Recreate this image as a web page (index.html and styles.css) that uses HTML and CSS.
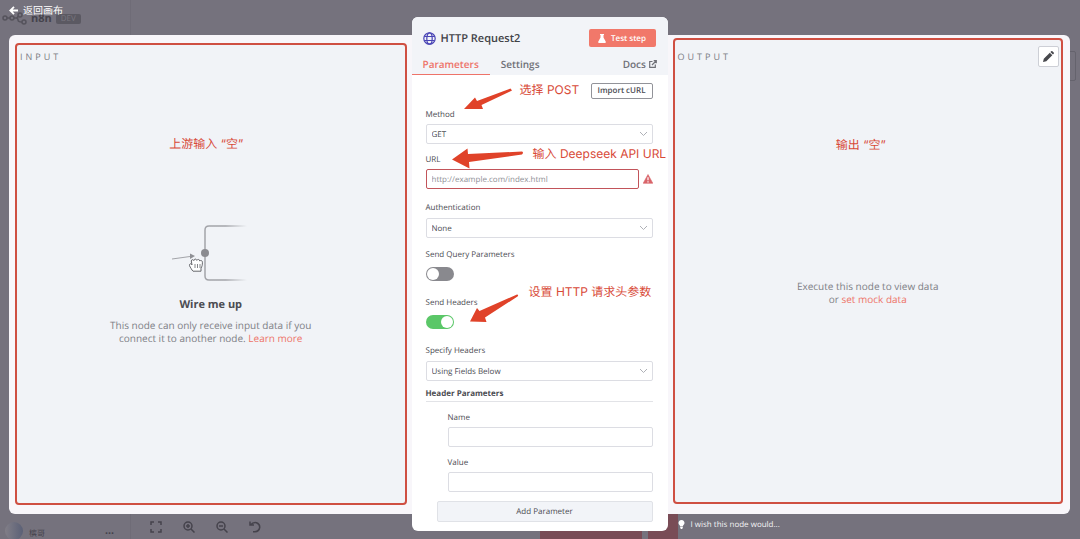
FILE: index.html
```html
<!DOCTYPE html>
<html lang="zh-CN">
  <head>
    <meta charset="UTF-8" />
    <meta name="viewport" content="width=device-width, initial-scale=1.0" />
    <title>HTTP Request2 - n8n</title>
    <link rel="stylesheet" href="styles.css">
  </head>
  <body>
    <!-- Dimmed canvas behind the node view -->
    <div class="backdrop">
      <div class="brand">
        <svg width="25" height="14" viewBox="0 0 25 14" fill="none" stroke="#55535c" stroke-width="1.500">
          <circle cx="3" cy="6" r="2" /><circle cx="10" cy="6" r="2" />
          <circle cx="18" cy="3" r="2" /><circle cx="22" cy="10" r="2" />
          <path d="M5 6h3M12 6h2q2 0 2-2M14 6q2 0 2 2t4 2" />
        </svg>
        <span class="brand-name">n8n</span>
        <span class="brand-tag">DEV</span>
      </div>
      <div class="sidebar-edge"></div>
      <div class="canvas-card"></div>
      <div class="canvas-buttons"><i></i><i></i></div>
    </div>

    <div class="page">
      <header class="topbar">
        <a href="#" class="back">
          <svg width="9" height="9" viewBox="0 0 9 9" fill="none" stroke="#fff" stroke-width="1.800">
            <path d="M9 4.500H1.500M5 .8L1.300 4.500 5 8.200" />
          </svg>
          返回画布
        </a>
      </header>

      <main class="node-view">
        <section class="panel panel-input">
          <div class="frame">
            <h2>INPUT</h2>
            <p class="note note-center">上游输入 “空”</p>
            <div class="empty">
              <svg class="wire" width="82" height="58" viewBox="0 0 82 58" fill="none">
                <defs>
                  <linearGradient id="fade" x1="34" x2="77" y1="0" y2="0" gradientUnits="userSpaceOnUse">
                    <stop offset=".5" stop-color="#a3a4a9" />
                    <stop offset="1" stop-color="#a3a4a9" stop-opacity="0" />
                  </linearGradient>
                </defs>
                <path d="M77 1H39q-4 0-4 4v46q0 4 4 4h38" stroke="url(#fade)" stroke-width="1.500" />
                <circle cx="35" cy="28" r="4" fill="#8b8b90" />
                <path d="M2 34l18-2.500" stroke="#a3a4a9" />
                <path d="M20 28.500l5 2.500-5 3z" fill="#8f9095" />
                <path d="M22 45c-1-2-3-4-2.500-5.500.6-1.300 2-.6 2.500.5l-.7-4c0-1.600 2-1.800 2.500-.4.3-2 2.600-2 3-.2.7-1.500 2.800-1.200 3 .6 1-1 2.600-.4 2.600 1.200 0 3-.3 4-1.400 6v3h-8z" fill="#fff" stroke="#66676c" />
                <path d="M25 39v4M27.500 39v4M30 39v4" stroke="#66676c" stroke-width=".8" />
              </svg>
              <h3>Wire me up</h3>
              <p>This node can only receive input data if you<br>connect it to another node. <a href="#">Learn more</a></p>
            </div>
          </div>
        </section>

        <section class="modal">
          <div class="modal-head">
            <div class="title-row">
              <svg width="13" height="13" viewBox="0 0 13 13" fill="none" stroke="#4a45b5" stroke-width="1.200">
                <circle cx="6.500" cy="6.500" r="5.700" />
                <ellipse cx="6.500" cy="6.500" rx="2.700" ry="5.700" />
                <path d="M1.300 4.500h10.400M1.300 8.500h10.400" />
              </svg>
              <h1>HTTP Request2</h1>
              <button type="button" class="btn-test">
                <svg width="8" height="9" viewBox="0 0 8 9" fill="#fff">
                  <path d="M2 0h4v1h-.5v2.600L7.800 7.800Q8 9 7 9H1Q0 9 .2 7.800L2.500 3.600V1H2z" />
                </svg>
                Test step
              </button>
            </div>
            <nav class="tabs">
              <a href="#" class="active">Parameters</a>
              <a href="#">Settings</a>
              <a href="#" class="docs">
                Docs
                <svg width="8" height="8" viewBox="0 0 8 8" fill="none" stroke="#6f7077" stroke-width="1.200">
                  <path d="M3.500 1.500H.7v5.800h5.600V4.500M3 5l4-4M4.700.7h2.600v2.600" />
                </svg>
              </a>
            </nav>
          </div>

          <form class="params">
            <button type="button" class="btn-curl">Import cURL</button>

            <div class="field tight">
              <label for="method">Method</label>
              <div class="select">
                <select id="method"><option>GET</option></select>
                <svg width="9" height="6" viewBox="0 0 9 6"><path d="M1 1l3.500 3.500L8 1" /></svg>
              </div>
            </div>

            <div class="field tight">
              <label for="url">URL</label>
              <div class="url-row">
                <input type="text" id="url" class="invalid" placeholder="http://example.com/index.html" />
                <svg width="10" height="10" viewBox="0 0 10 10">
                  <path d="M5 .5l4.800 8.800H.2z" fill="#d9646a" stroke="#d9646a" stroke-linejoin="round" stroke-width=".6" />
                  <path d="M5 3.200v3M5 7.200v1.200" stroke="#fff" stroke-width="1.200" />
                </svg>
              </div>
            </div>

            <div class="field">
              <label for="auth">Authentication</label>
              <div class="select">
                <select id="auth"><option>None</option></select>
                <svg width="9" height="6" viewBox="0 0 9 6"><path d="M1 1l3.500 3.500L8 1" /></svg>
              </div>
            </div>

            <div class="field toggle">
              <label for="query">Send Query Parameters</label>
              <input type="checkbox" id="query" />
            </div>

            <div class="field toggle">
              <label for="headers">Send Headers</label>
              <input type="checkbox" id="headers" checked />
            </div>

            <div class="field">
              <label for="specify">Specify Headers</label>
              <div class="select">
                <select id="specify"><option>Using Fields Below</option></select>
                <svg width="9" height="6" viewBox="0 0 9 6"><path d="M1 1l3.500 3.500L8 1" /></svg>
              </div>
            </div>

            <h4>Header Parameters</h4>
            <div class="nested">
              <div class="field tight">
                <label for="name">Name</label>
                <input type="text" id="name" />
              </div>
              <div class="field tight">
                <label for="value">Value</label>
                <input type="text" id="value" />
              </div>
            </div>
            <button type="button" class="btn-add">Add Parameter</button>
          </form>

          <!-- Tutorial notes over the form -->
          <p class="note note-method">选择 POST</p>
          <p class="note note-url">输入 Deepseek API URL</p>
          <p class="note note-headers">设置 HTTP 请求头参数</p>
          <svg class="arrow arrow-method" width="50" height="24" viewBox="0 0 50 24">
            <path d="M1 21L12 9.500l2 3.500L47.500 .5l1.500 2L18.500 17l1.500 4z" />
          </svg>
          <svg class="arrow arrow-url" width="74" height="24" viewBox="0 0 74 24">
            <path d="M1 12.500L16.500 1.500l.5 5.500 54-2.500q2 1 0 3L18 15l.5 6.500z" />
          </svg>
          <svg class="arrow arrow-headers" width="52" height="30" viewBox="0 0 52 30">
            <path d="M1 27.500L8 14l2.500 3L48 .5q2 .5 .5 2L16 23.500l1.500 4.500z" />
          </svg>
        </section>

        <section class="panel panel-output">
          <div class="frame">
            <h2>OUTPUT</h2>
            <button type="button" class="btn-edit" aria-label="Edit output">
              <svg width="11" height="11" viewBox="0 0 11 11" fill="#47484d">
                <path d="M0 11l.8-3.300L6.800 1.700l2.500 2.500-6 6zM7.400 1.100L8.200.3q.6-.5 1.200 0l1.300 1.300q.5.600 0 1.200l-.8.8z" />
              </svg>
            </button>
            <p class="note note-center">输出 “空”</p>
            <p class="empty">Execute this node to view data<br>or <a href="#">set mock data</a></p>
          </div>
        </section>
      </main>

      <footer class="bottombar">
        <div class="canvas-tools">
          <span class="avatar"></span>
          <span class="user">槟哥</span>
          <span class="dots">•••</span>
          <div class="zoom">
            <svg width="12" height="12" viewBox="0 0 12 12"><path d="M1 4V1h3M8 1h3v3M11 8v3H8M4 11H1V8" /></svg>
            <svg width="12" height="12" viewBox="0 0 12 12"><circle cx="5" cy="5" r="4" /><path d="M8 8l3.500 3.500M3 5h4M5 3v4" /></svg>
            <svg width="12" height="12" viewBox="0 0 12 12"><circle cx="5" cy="5" r="4" /><path d="M8 8l3.500 3.500M3 5h4" /></svg>
            <svg width="12" height="12" viewBox="0 0 12 12"><path d="M1 .5V4h4M1.500 4Q4 1 7.500 1.700 11 3 10.700 6.500 10 10.500 6 10.700H4" /></svg>
          </div>
        </div>
        <a href="#" class="feedback">
          <svg width="7" height="9" viewBox="0 0 7 9" fill="#fff">
            <path d="M3.500 0C5.500 0 6.500 1.500 6.500 3S5 5 4.800 6.500H2.200C2 5 .5 4.500 .5 3S1.500 0 3.500 0zM2.200 7h2.600v1L4 9H3L2.200 8z" />
          </svg>
          I wish this node would...
        </a>
      </footer>
    </div>
  </body>
</html>
```
FILE: styles.css
```css
* {
  box-sizing: border-box;
}

body {
  margin: 0;
  min-height: 100vh;
  overflow: hidden;
  position: relative;
  background-color: #75727d;
  font-family: "Open Sans", "Noto Sans CJK SC", sans-serif;
  font-size: 8px;
  color: #4b4c52;
  text-rendering: geometricPrecision;
}

h1,
h2,
h3,
h4,
p {
  margin: 0;
}

a {
  color: #ee7369;
  text-decoration: none;
}

button,
input,
select {
  font: inherit;
  color: inherit;
  text-rendering: inherit;
}

button {
  cursor: pointer;
}

/* Dimmed canvas */
.backdrop {
  position: absolute;
  inset: 0;
  overflow: hidden;
}

.brand {
  display: flex;
  align-items: center;
  gap: 4px;
  padding: 12px 2px;
  color: #45434c;
}

.brand-name {
  font-size: 11px;
  line-height: 14px;
  font-weight: 700;
}

.brand-tag {
  padding: 0 5px;
  border-radius: 2px;
  background: #5b5962;
  color: #79767f;
  line-height: 10px;
}

.sidebar-edge {
  position: absolute;
  top: 0;
  bottom: 0;
  left: 130px;
  border-left: 1px solid #6f6c77;
}

.canvas-card {
  position: absolute;
  top: 51px;
  right: 4px;
  width: 20px;
  height: 30px;
  border: 1px solid #65636d;
  border-radius: 2px;
}

.canvas-buttons {
  position: absolute;
  bottom: 0;
  left: 50%;
  display: flex;
  gap: 6px;
  height: 25px;
}

.canvas-buttons i {
  width: 102px;
  background: #794c56;
}

.canvas-buttons i + i {
  width: 30px;
}

/* Node view */
.page {
  position: relative;
  min-height: 100vh;
  display: flex;
  flex-direction: column;
}

.topbar {
  height: 35px;
  padding: 3px 9px;
}

.back {
  display: inline-flex;
  align-items: center;
  gap: 5px;
  color: #fff;
  font-size: 10px;
  line-height: 15px;
}

.node-view {
  flex: 1;
  display: grid;
  grid-template-columns: 1fr 256px 1fr;
  margin: 0 10px 0 9px;
  border-radius: 6px;
  background: #f8f6fa;
}

.panel {
  display: flex;
}

.panel-input {
  padding: 8px 5px 9px 6px;
}

.panel-output {
  padding: 3px 7px 10px 5px;
}

.frame {
  flex: 1;
  position: relative;
  display: flex;
  flex-direction: column;
  border: 2px solid #cf4f42;
  border-radius: 4px;
  background: #f1f3f7;
}

.frame h2 {
  padding: 5px 3px 0;
  font-size: 9px;
  font-weight: 400;
  line-height: 14px;
  letter-spacing: 3px;
  color: #7b7c83;
}

.panel-output h2 {
  padding-top: 10px;
}

.empty {
  margin: auto;
  text-align: center;
  font-size: 10px;
  line-height: 13px;
  color: #7e7f86;
}

.panel-input .empty {
  padding-top: 3px;
}

.panel-output .empty {
  padding-top: 20px;
}

.empty h3 {
  margin: 13px 0 5px;
  font-size: 11px;
  line-height: 18px;
  color: #4b4c52;
  font-weight: 700;
}

.wire {
  display: block;
  margin: 0 auto;
}

.btn-edit {
  position: absolute;
  top: 6px;
  right: 2px;
  width: 21px;
  height: 21px;
  padding: 0;
  display: grid;
  place-items: center;
  border: 1px solid #cdcfd6;
  border-radius: 2px;
  background: #fff;
}

/* Modal */
.modal {
  position: relative;
  z-index: 1;
  margin: -18px 0 -17px;
  border-radius: 6px;
  background: #fff;
}

.modal-head {
  height: 58px;
  border-radius: 6px 6px 0 0;
  background: #f2f4f8;
}

.title-row {
  display: flex;
  align-items: center;
  gap: 5px;
  height: 39px;
  padding: 3px 12px 0 11px;
}

.title-row h1 {
  flex: 1;
  font-size: 11px;
  font-weight: 600;
  color: #414247;
}

.btn-test {
  display: flex;
  align-items: center;
  justify-content: center;
  gap: 5px;
  width: 67px;
  height: 18px;
  padding: 0;
  border: 0;
  border-radius: 2px;
  background: #f1786a;
  color: #fff;
  font-weight: 600;
}

.tabs {
  display: flex;
  height: 19px;
  font-size: 10px;
  font-weight: 600;
  line-height: 16px;
}

.tabs a {
  padding: 0 11px;
  color: #6f7077;
}

.tabs .active {
  color: #ee7369;
  border-bottom: 1px solid #ee7369;
}

.tabs .docs {
  margin-left: auto;
}

.params {
  display: flex;
  flex-direction: column;
  padding: 8px 15px 9px 14px;
}

.btn-curl {
  align-self: flex-end;
  width: 62px;
  height: 16px;
  padding: 0;
  border: 1px solid #929399;
  border-radius: 2px;
  background: #fff;
  font-weight: 600;
  line-height: 14px;
  white-space: nowrap;
}

.field {
  display: flex;
  flex-direction: column;
  gap: 3px;
  margin-top: 12px;
}

.field.tight {
  gap: 2px;
  margin-top: 9px;
}

.field.toggle {
  gap: 5px;
  margin-top: 10px;
}

.toggle + .field,
.toggle + .field.toggle {
  margin-top: 15px;
}

.field label {
  line-height: 14px;
}

.field input[type="text"],
.field select {
  width: 100%;
  height: 20px;
  padding: 0 5px;
  border: 1px solid #dcdde3;
  border-radius: 2px;
  background: #fff;
  appearance: none;
}

.field input::placeholder {
  color: #8f9096;
}

.field input.invalid {
  border-color: #c2545a;
}

.url-row {
  display: flex;
  align-items: center;
  gap: 4px;
}

.url-row svg {
  flex: none;
}

.select {
  display: flex;
  position: relative;
}

.select svg {
  position: absolute;
  top: 7px;
  right: 5px;
  fill: none;
  stroke: #aeb0b6;
}

.toggle input {
  appearance: none;
  width: 28px;
  height: 14px;
  margin: 0;
  padding: 1px;
  border-radius: 7px;
  background: #89898e;
}

.toggle input::before {
  content: "";
  display: block;
  width: 12px;
  height: 12px;
  border-radius: 50%;
  background: #fff;
}

.toggle input:checked {
  background: #5bc768;
}

.toggle input:checked::before {
  margin-left: auto;
}

.params h4 {
  margin-top: 6px;
  border-bottom: 1px solid #e2e3e7;
  font-weight: 700;
  line-height: 14px;
}

.nested {
  margin-left: 22px;
}

.btn-add {
  height: 21px;
  margin: 9px 0 0 11px;
  padding: 0;
  border: 1px solid #e0e2e7;
  border-radius: 2px;
  background: #f2f4f8;
}

/* Tutorial notes */
.note {
  position: absolute;
  font-family: Inter, "Noto Sans CJK SC", sans-serif;
  font-size: 12px;
  line-height: 18px;
  color: #d84a38;
  white-space: nowrap;
}

.note-center {
  left: 0;
  right: 9px;
  top: 90px;
  text-align: center;
}

.panel-output .note-center {
  right: 14px;
  top: 96px;
}

.note-method {
  top: 64px;
  left: 108px;
}

.note-url {
  top: 128px;
  left: 121px;
}

.note-headers {
  top: 266px;
  left: 117px;
}

.arrow {
  position: absolute;
  fill: #e04229;
}

.arrow-method {
  top: 71px;
  left: 51px;
}

.arrow-url {
  top: 130px;
  left: 39px;
}

.arrow-headers {
  top: 277px;
  left: 57px;
}

/* Bottom bar */
.bottombar {
  height: 25px;
  display: grid;
  grid-template-columns: 1fr 256px 1fr;
  margin: 0 10px 0 5px;
}

.canvas-tools {
  display: flex;
  align-items: center;
  gap: 6px;
  color: #45434c;
}

.avatar {
  width: 18px;
  height: 18px;
  margin-top: 8px;
  border-radius: 50%;
  background: linear-gradient(90deg, #817e87, #5b6076);
}

.user,
.dots {
  margin-top: 12px;
}

.dots {
  margin-left: 54px;
}

.zoom {
  display: flex;
  gap: 21px;
  margin-left: 30px;
}

.zoom svg {
  fill: none;
  stroke: #45434c;
  stroke-width: 1.5;
}

.feedback {
  grid-column: 3;
  display: flex;
  align-items: center;
  gap: 6px;
  padding: 0 12px 5px;
  color: #f3f2f5;
}
```
